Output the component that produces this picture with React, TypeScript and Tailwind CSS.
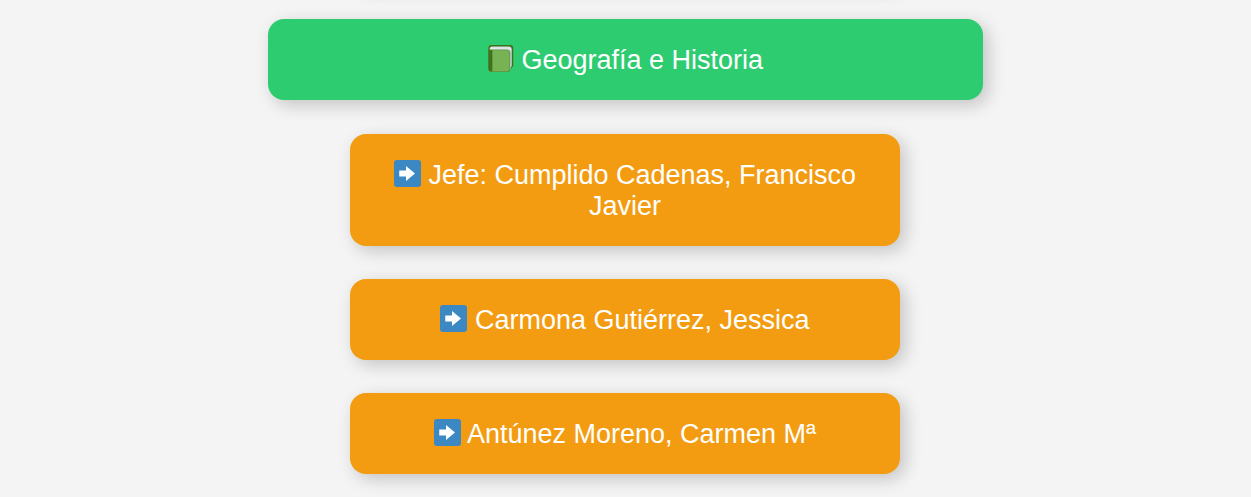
import React from 'react';

interface Department {
    name: string;
    teachers: string[];
}

const department: Department = {
    name: 'Geografía e Historia',
    teachers: [
        'Jefe: Cumplido Cadenas, Francisco Javier',
        'Carmona Gutiérrez, Jessica',
        'Antúnez Moreno, Carmen Mª',
    ],
};

const BookIcon: React.FC = () => (
    <svg viewBox="0 0 36 36" aria-hidden="true" className="inline h-[27px] w-[27px] align-[-3px]">
        <path fill="#3e721d" d="M6 0h25a4 4 0 0 1 4 4v24l-3 4V7H4v27a3 3 0 0 1-2-3V5a4 4 0 0 1 4-5z" />
        <path fill="#ccd6dd" d="M7 2h22a4 4 0 0 1 4 4v22l-3 5H8L4 6a3 3 0 0 1 3-4z" />
        <path fill="#e1e8ed" d="M7 3h22a3 3 0 0 1 3 3v2L5 7a2 2 0 0 1 2-4z" />
        <path fill="#5c913b" d="M4 6h23a4 4 0 0 1 4 4v23a3 3 0 0 1-3 3H5a3 3 0 0 1-3-3V4a3 3 0 0 0 2 2z" />
        <path fill="#77b255" d="M7 7h20a3 3 0 0 1 3 3v22a3 3 0 0 1-3 3H7z" />
        <path fill="#3e721d" d="M2 5a3 3 0 0 0 3 2h2v28H5a3 3 0 0 1-3-3z" />
    </svg>
);

const ArrowIcon: React.FC = () => (
    <svg viewBox="0 0 36 36" aria-hidden="true" className="inline h-[27px] w-[27px] align-[-3px]">
        <rect width="36" height="36" rx="4" fill="#3b88c3" />
        <path fill="#fff" d="M16 8l12 10-12 10v-6H7v-8h9z" />
    </svg>
);

const App: React.FC = () => {
    return (
        <main className="min-h-screen overflow-hidden bg-[#f4f4f4] pr-[76px] pb-6 pl-[75px] font-['Liberation_Sans',Arial,sans-serif] text-[27px] leading-[31px] text-white">
            {/* end of the previous department */}
            <div className="mx-auto -mt-24 h-[81px] w-1/2 rounded-2xl bg-[#f39c12] shadow-[5px_5px_17px_rgba(0,0,0,0.2)]" />

            <section className="mt-[34px] flex flex-col items-center">
                <button
                    type="button"
                    className="w-[65%] rounded-2xl bg-[#2ecc71] px-[25px] pt-[26px] pb-6 shadow-[5px_5px_17px_rgba(0,0,0,0.2)]"
                >
                    <BookIcon /> {department.name}
                </button>

                <div className="mt-[34px] flex w-full flex-col items-center gap-[33px]">
                    {department.teachers.map((teacher) => (
                        <button
                            key={teacher}
                            type="button"
                            className="w-1/2 rounded-2xl bg-[#f39c12] px-[25px] pt-[26px] pb-6 shadow-[5px_5px_17px_rgba(0,0,0,0.2)]"
                        >
                            <ArrowIcon /> {teacher}
                        </button>
                    ))}
                </div>
            </section>
        </main>
    );
};

export default App;
